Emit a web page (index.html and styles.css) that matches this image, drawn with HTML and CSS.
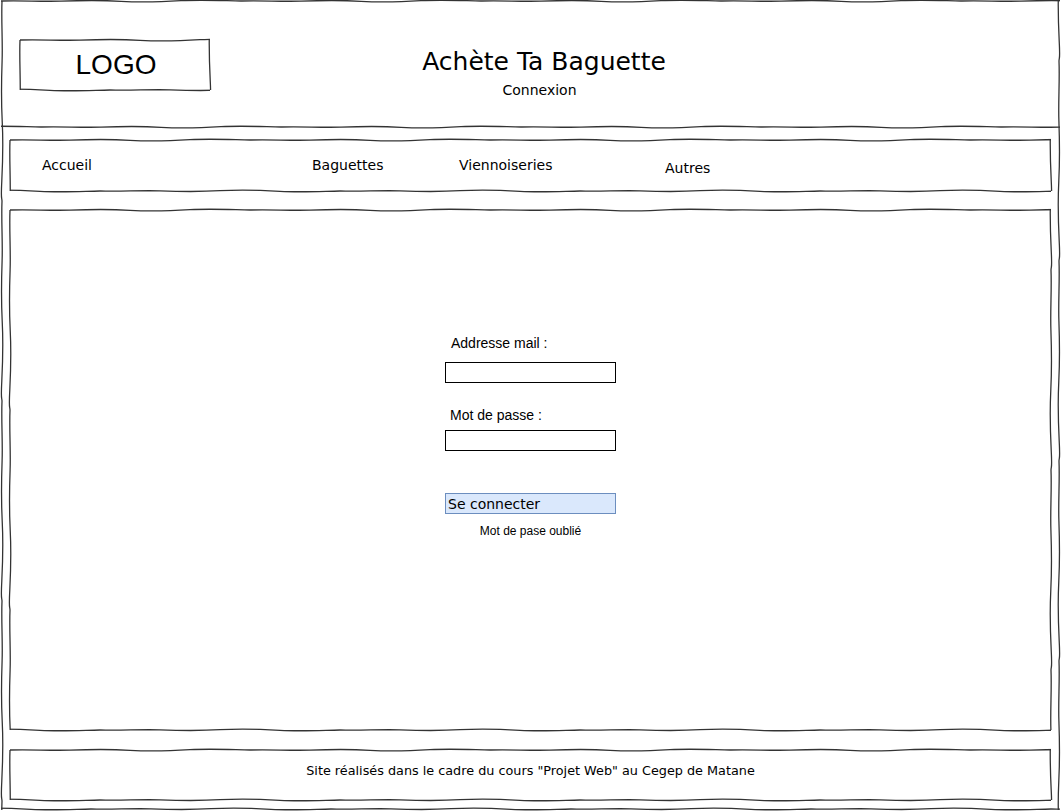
FILE: index.html
```html
<!DOCTYPE html>
<html lang="fr">
<head>
<meta charset="utf-8">
<title>Achète Ta Baguette - Connexion</title>
<link rel="stylesheet" href="styles.css">
</head>
<body>
<div class="page sketch">
  <header class="header sketch-bottom">
    <div class="logo sketch">LOGO</div>
    <div class="titles">
      <h1 class="title">Achète Ta Baguette</h1>
      <div class="subtitle">Connexion</div>
    </div>
  </header>
  <div class="content">
    <nav class="nav sketch">
      <a class="nav-item">Accueil</a>
      <a class="nav-item">Baguettes</a>
      <a class="nav-item">Viennoiseries</a>
      <a class="nav-item nav-low">Autres</a>
    </nav>
    <main class="main sketch">
      <form class="login">
        <label class="label label-mail">Addresse mail :</label>
        <input class="field field-mail" type="text">
        <label class="label label-pass">Mot de passe :</label>
        <input class="field field-pass" type="password">
        <button class="submit" type="button">Se connecter</button>
        <a class="forgot">Mot de pase oublié</a>
      </form>
    </main>
    <footer class="footer sketch">Site réalisés dans le cadre du cours "Projet Web" au Cegep de Matane</footer>
  </div>
</div>
</body>
</html>
```
FILE: styles.css
```css
html, body {
  margin: 0;
  padding: 0;
  background: #ffffff;
}

.page {
  position: relative;
  width: 1061px;
  height: 811px;
  box-sizing: border-box;
  font-family: "DejaVu Sans", Verdana, sans-serif;
  color: #000;
  overflow: hidden;
}

/* hand-drawn (wavy) borders, drawn as repeating vector strokes */
.sketch {
  position: relative;
}
/* top and bottom edges */
.sketch::before {
  content: "";
  position: absolute;
  inset: -2px 0;
  pointer-events: none;
  background-image:
    url("data:image/svg+xml,%3Csvg xmlns='http://www.w3.org/2000/svg' width='240' height='4'%3E%3Cpath d='M0 2 C20 1.2 40 2.8 60 2.1 S100 1.1 120 2.3 S160 2.9 180 1.7 S220 1.6 240 2' fill='none' stroke='%23333' stroke-width='1.3'/%3E%3C/svg%3E"),
    url("data:image/svg+xml,%3Csvg xmlns='http://www.w3.org/2000/svg' width='240' height='4'%3E%3Cpath d='M0 2 C20 2.8 40 1.2 60 1.9 S100 2.9 120 1.7 S160 1.1 180 2.3 S220 2.4 240 2' fill='none' stroke='%23333' stroke-width='1.3'/%3E%3C/svg%3E");
  background-repeat: repeat-x, repeat-x;
  background-position: 0 0, 90px 100%;
  background-size: 240px 4px, 240px 4px;
}
/* left and right edges */
.sketch::after {
  content: "";
  position: absolute;
  inset: 0 -2px;
  pointer-events: none;
  background-image:
    url("data:image/svg+xml,%3Csvg xmlns='http://www.w3.org/2000/svg' width='4' height='200'%3E%3Cpath d='M2 0 C1.2 20 2.8 40 2.1 60 S1.2 100 2.2 120 S2.8 160 1.8 180 S1.7 195 2 200' fill='none' stroke='%23333' stroke-width='1.3'/%3E%3C/svg%3E"),
    url("data:image/svg+xml,%3Csvg xmlns='http://www.w3.org/2000/svg' width='4' height='200'%3E%3Cpath d='M2 0 C2.8 20 1.2 40 1.9 60 S2.8 100 1.8 120 S1.2 160 2.2 180 S2.3 195 2 200' fill='none' stroke='%23333' stroke-width='1.3'/%3E%3C/svg%3E");
  background-repeat: repeat-y, repeat-y;
  background-position: 0 0, 100% 60px;
  background-size: 4px 200px, 4px 200px;
}
.page::before {
  inset: -1px 1px 0 1px;
}
.page::after {
  inset: 1px 0 1px 0;
}

.sketch-bottom {
  position: relative;
}
.sketch-bottom::after {
  content: "";
  position: absolute;
  left: 1px;
  right: 1px;
  bottom: -2px;
  height: 4px;
  pointer-events: none;
  background-image: url("data:image/svg+xml,%3Csvg xmlns='http://www.w3.org/2000/svg' width='240' height='4'%3E%3Cpath d='M0 2 C20 1.2 40 2.8 60 2.1 S100 1.1 120 2.3 S160 2.9 180 1.7 S220 1.6 240 2' fill='none' stroke='%23333' stroke-width='1.3'/%3E%3C/svg%3E");
  background-repeat: repeat-x;
  background-position: 40px 0;
  background-size: 240px 4px;
}

/* header */
.header {
  height: 127px;
  box-sizing: border-box;
  display: flex;
  align-items: flex-start;
  padding: 40px 0 0 20px;
}
.logo {
  width: 190px;
  height: 50px;
  box-sizing: border-box;
  display: flex;
  align-items: center;
  justify-content: center;
  font-family: "Liberation Sans", Arial, sans-serif;
  font-size: 28px;
  padding-left: 2px;
}
.titles {
  width: 668px;
  text-align: center;
  padding-top: 8px;
}
.title {
  margin: 0;
  font-weight: normal;
  font-size: 25px;
  line-height: 28px;
}
.subtitle {
  margin-top: 5px;
  font-size: 14px;
  line-height: 18px;
  padding-right: 9px;
}

/* content */
.content {
  padding: 13px 10px 0 10px;
  display: flex;
  flex-direction: column;
}

.nav {
  height: 51px;
  box-sizing: border-box;
  display: grid;
  grid-template-columns: 270px 147px 206px auto;
  align-items: start;
  padding: 17px 0 0 32px;
  font-size: 14px;
  line-height: 17px;
}
.nav-item {
  color: #000;
  text-decoration: none;
}
.nav-low {
  margin-top: 3px;
}

.main {
  margin-top: 19px;
  height: 520px;
  box-sizing: border-box;
  display: flex;
  justify-content: center;
  padding-top: 125px;
}
.login {
  width: 171px;
  display: flex;
  flex-direction: column;
  align-items: stretch;
}
.label {
  font-family: "Liberation Sans", Arial, sans-serif;
  font-size: 14px;
  line-height: 16px;
}
.label-mail {
  padding-left: 6px;
}
.label-pass {
  padding-left: 5px;
  margin-top: 24px;
}
.field {
  height: 21px;
  box-sizing: border-box;
  border: 1px solid #000;
  margin: 0;
  padding: 0 2px;
  background: #fff;
  outline: none;
}
.field-mail {
  margin-top: 11px;
}
.field-pass {
  margin-top: 7px;
}
.submit {
  margin-top: 42px;
  height: 21px;
  box-sizing: border-box;
  border: 1px solid #6c8ebf;
  background: #dae8fc;
  padding: 1px 2px 0 2px;
  text-align: left;
  font-family: "DejaVu Sans", Verdana, sans-serif;
  font-size: 14px;
  line-height: 18px;
  color: #000;
  border-radius: 0;
}
.forgot {
  margin-top: 10px;
  text-align: center;
  font-family: "Liberation Sans", Arial, sans-serif;
  font-size: 12px;
  line-height: 14px;
  color: #000;
}

.footer {
  margin-top: 20px;
  height: 50px;
  box-sizing: border-box;
  text-align: center;
  font-size: 12.8px;
  line-height: 16px;
  padding-top: 13px;
}
```
